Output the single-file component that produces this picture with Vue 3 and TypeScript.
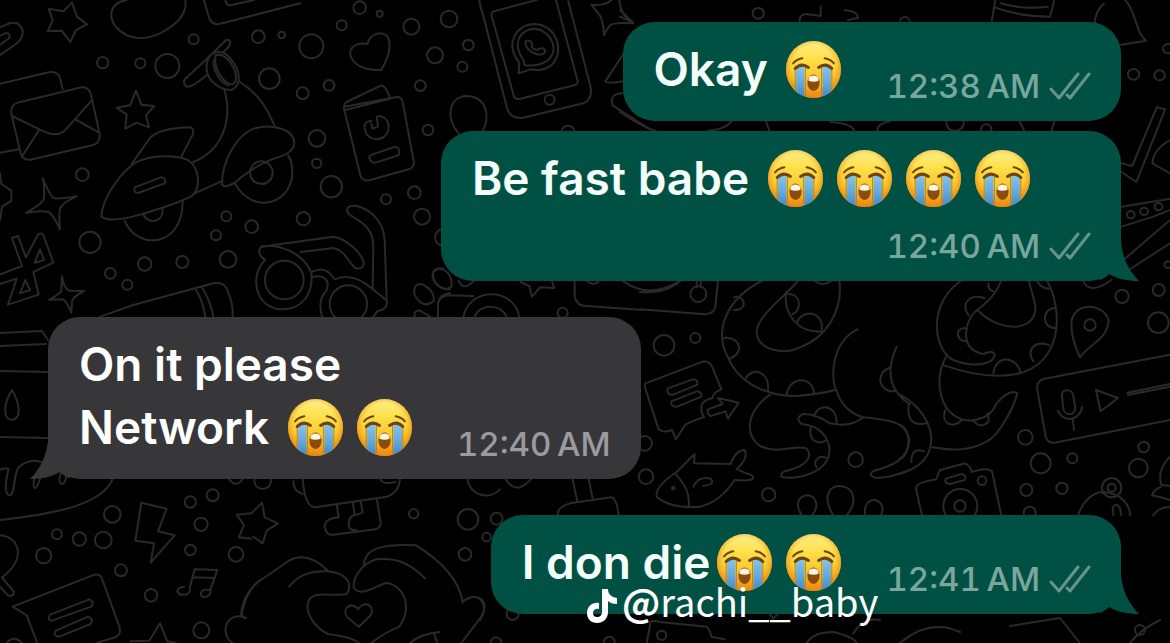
<script setup lang="ts">
interface Message {
  id: number
  lines: { text: string; sobs: number }[]
  time: string
  sent: boolean
  tail: boolean
  startsGroup: boolean
}

const messages: Message[] = [
  { id: 1, lines: [{ text: 'Okay ', sobs: 1 }], time: '12:38\u202fAM', sent: true, tail: false, startsGroup: false },
  { id: 2, lines: [{ text: 'Be fast babe ', sobs: 4 }], time: '12:40\u202fAM', sent: true, tail: true, startsGroup: false },
  {
    id: 3,
    lines: [{ text: 'On it please', sobs: 0 }, { text: 'Network ', sobs: 2 }],
    time: '12:40\u202fAM', sent: false, tail: true, startsGroup: true,
  },
  { id: 4, lines: [{ text: 'I don die', sobs: 2 }], time: '12:41\u202fAM', sent: true, tail: true, startsGroup: true },
]

interface Doodle {
  transform: string
  paths: string[]
  circles: [number, number, number][]
}

const doodles: Doodle[] = [
  {
    transform: 'scale(.33333)',
    paths: [
      'M216 8 L231 50 L261 73 L228 90 L211 126 L185 92 L143 94 L158 62 L146 26 L190 34 Z',
      'M0 82 L28 70 Q60 62 68 92 Q70 118 48 132 L0 165 M0 108 L16 99 Q32 100 28 114 L0 134',
      'M380 0 C330 8 325 48 345 78 C380 120 430 122 480 100 C535 72 562 40 556 0',
      'M612 0 L626 50 Q634 76 658 72 L900 10 M676 0 Q680 18 692 16 L762 0',
      'M0 251 L140 218 Q172 210 180 234 L188 268 M0 458 L56 448',
      'M52 308 L245 262 Q266 260 273 284 L299 402 Q302 426 282 434 L92 479 Q68 482 62 460 L34 342 Q30 316 52 308 Z M36 348 L126 392 Q165 412 192 394 L275 302 M116 392 L67 468 M226 358 L297 398',
      'M408 272 L424 314 L463 318 L438 346 L447 382 L409 368 L376 386 L380 344 L350 323 L390 316 Z',
      'M396 490 L450 414 Q480 384 570 382 Q584 386 578 404 L544 470',
      'M304 650 C306 600 350 534 390 500 C430 464 520 462 564 480 C600 505 602 560 578 586 Q550 605 420 644 Q330 670 304 650 Z',
      'M404 562 L482 532 Q500 532 494 550 L414 579 Q400 578 404 562 Z',
      'M374 662 C410 752 550 744 548 602 M430 644 C448 676 492 666 488 624',
      'M580 486 C660 454 700 370 674 272 M584 580 L664 544',
      'M720 246 C780 285 800 324 824 378',
      'M666 554 C666 480 710 408 760 386 C820 368 890 390 882 436 Q878 456 840 470 C780 488 740 518 704 548 Q674 566 666 554 Z',
      'M704 550 C760 650 888 612 876 500 Q874 480 864 466',
      'M632 166 L678 120 Q696 116 688 138 L669 158 M632 166 L556 236 Q546 250 560 260 Q574 264 620 226',
      'M645 158 C616 166 610 214 636 244 Q660 270 696 270 C728 250 720 210 690 174 Q670 150 645 158 Z M642 180 C636 200 654 244 684 256',
      'M646 166 C680 154 716 214 706 246 C690 272 640 220 646 166 Z',
      'M128 534 Q148 584 160 594 Q180 598 230 589 Q184 610 180 626 Q176 650 180 688 Q158 642 146 636 Q124 630 78 639 Q130 610 132 594 Q134 560 128 534 Z',
      'M186 829 Q190 864 208 872 L252 873 Q220 890 216 904 L214 938 Q200 904 190 898 L148 899 Q180 882 184 872 Z',
      'M36 714 L54 708 L78 772 L115 702 Q126 696 132 710 L160 788 L100 816 L116 884 L24 914 L50 836 L0 852 M0 824 L66 798 L36 714 M120 748 L132 780 L104 788 Z M76 840 L90 870 L60 880 Z',
      'M0 520 L4 552 L34 572 V602 L6 620 L0 660',
      'M300 950 L400 915 L640 850 Q672 844 682 870 Q700 910 698 950 M586 866 Q608 900 616 950 M606 862 Q630 900 640 950',
    ],
    circles: [[308,188,17],[421,190,15],[502,198,36],[581,118,15],[775,110,19],[845,105,10],[808,236,31],[784,518,34],[247,524,19],[679,649,15],[648,706,15],[755,680,19],[270,727,32],[434,792,20],[547,786,18],[684,778,25],[331,820,16],[382,854,15]],
  },
  {
    transform: 'translate(230 0) scale(.33333)',
    paths: [
      'M412 132 C420 100 458 90 474 112 C488 144 470 180 454 210 C400 212 366 194 360 160 C364 130 396 128 412 132 Z',
      'M343 320 L505 290 Q516 296 518 306 L552 488 Q552 502 536 508 L418 541 Q398 544 391 526 L343 330 Q338 316 350 306 L452 257 Q466 254 480 294 M346 330 L480 296',
      'M424 362 Q400 366 404 384 C408 430 474 430 476 380 C474 356 460 346 440 350 L444 380 L428 386 L424 370 M426 464 L490 442 Q508 438 508 458 Q508 466 498 468 L440 487 Q424 492 418 474 Q416 468 426 464 Z',
      'M352 626 C360 610 394 616 424 640 Q462 672 464 720 L470 902 M428 866 L430 740 Q430 690 390 664 L356 642 Q350 636 352 626',
      'M94 740 L310 710 C350 716 396 760 402 790 Q398 810 376 804 C350 780 344 750 310 744 L212 756',
      'M94 740 Q76 760 106 780 C60 820 70 920 150 928 C220 930 250 880 244 818 C220 760 150 730 94 740 M246 816 Q286 794 314 838 C370 814 410 850 472 904 Q470 930 444 932 L430 950 M246 832 C280 822 304 840 288 874 Q262 900 276 950',
      'M660 880 Q630 880 624 910 V950 M554 950 Q550 930 570 932 L600 950 M640 806 Q606 800 608 832 Q620 868 660 868',
      'M580 854 C550 844 544 880 566 902 Q590 924 612 902 Q612 870 580 854 Z',
    ],
    circles: [[389,23,19],[449,41,9],[335,76,15],[244,139,36],[544,80,24],[615,166,24],[297,256,16],[218,280,18],[571,257,16],[594,390,16],[261,415,25],[260,490,14],[304,560,32],[220,656,20],[468,598,15],[553,578,19],[576,650,24],[163,840,58],[355,912,56],[640,712,25]],
  },
  {
    transform: 'translate(430 0) scale(.33333)',
    paths: [
      'M148 0 Q152 28 158 40 L230 320 Q238 356 276 354 L460 310 Q488 298 482 262 L414 0 M184 44 L252 290 Q256 300 272 296 L438 254 Q446 248 442 240 L378 0 M184 44 Q184 34 198 32 L320 0',
      'M266 220 L268 188 C222 130 260 72 314 72 C378 74 406 152 366 194 Q340 216 302 208 Z M284 196 L280 180 C240 120 280 86 316 86 C360 90 392 150 352 182 Q326 200 284 196',
      'M286 126 C294 116 306 124 306 134 Q302 146 320 150 Q342 138 346 154 Q342 168 318 162 Q286 150 286 126 Z',
      'M484 14 Q526 18 544 0 M568 0 Q572 48 608 70 Q550 66 540 76 Q530 86 522 106 Q520 68 512 50 L484 14',
      'M588 150 L526 244 Q530 252 582 244 M580 280 Q536 280 548 316 L660 388',
      'M86 400 C44 350 58 290 110 288 C170 290 184 350 154 400',
    ],
    circles: [[57,57,25],[115,135,16],[97,200,15],[359,299,15],[414,397,20]],
  },
  {
    transform: 'translate(620 10) scale(.3508 .33333)',
    paths: [
      'M0 20 L38 38 L0 0 M512 36 Q510 14 530 12 L572 18 V-10 M640 0 Q680 4 678 24 L650 30 M1060 32 L1070 -30 M1068 -8 Q1140 20 1226 20 L1238 -30 M1085 -20 Q1150 0 1220 -10 M1354 60 Q1348 10 1380 -20 M1440 -30 C1470 0 1470 70 1500 92 L1428 104',
      'M0 306 Q60 350 100 362 M250 362 Q304 358 320 330 M416 334 L426 362 M600 336 Q660 340 668 362 M734 362 Q734 340 770 334 M930 336 Q930 362 956 362 Q980 360 980 336 M1140 336 L1152 362 M1230 362 L1238 334',
      'M1530 292 L1554 298 L1472 516 L1430 486 M1530 292 L1460 468 L1430 460 M1568 390 Q1518 420 1518 460 L1568 490 M1430 590 L1568 566 M1430 650 L1520 620 L1568 600 M1424 760 L1568 630 M1450 780 L1568 700',
    ],
    circles: [[394,10,16],[1562,116,14],[1464,193,16],[1538,196,15],[1535,590,11],[1494,604,11],[1456,614,11],[1562,764,10],[812,35,14],[1044,358,15]],
  },
  {
    transform: 'translate(640 270) scale(.33333)',
    paths: [
      'M0 66 Q80 72 124 30 M0 118 L196 133 Q220 132 226 112 L234 30 M170 30 V52 M182 30 V52',
      'M370 30 C250 90 224 190 264 262 C300 350 400 380 470 378 Q540 372 586 360',
      'M476 30 C430 86 346 140 350 190 C356 240 430 256 480 232 C560 202 610 120 598 30 M438 66 C430 140 480 190 544 184',
      'M282 82 C310 70 330 120 282 120 M252 204 C300 198 316 250 268 266 M318 324 C336 290 390 304 384 360 M440 374 C450 314 520 320 522 370 M444 72 C488 72 482 126 458 132 M470 158 C486 118 548 120 546 178 M520 30 Q550 54 576 30',
      'M652 178 C570 220 572 330 590 364 Q610 424 670 442 M770 230 C730 320 760 370 810 404 M748 294 C706 308 714 366 764 364 M670 442 Q630 474 570 460 Q530 432 490 432 Q462 446 486 462 C560 470 590 540 552 584 C520 620 450 628 424 620 Q420 606 440 602 C500 588 520 560 500 536 C470 520 420 556 360 528 C320 500 310 430 390 374 M670 442 C760 450 800 460 808 510 C804 570 750 590 702 602 Q680 616 708 624 Q760 622 810 600',
      'M522 438 C534 400 590 400 590 460 M512 474 C506 510 530 526 558 512 M530 592 C516 570 540 554 558 564',
      'M16 340 L190 274 Q212 274 218 294 L244 358 Q220 366 218 384 Q186 390 184 410 Q182 426 192 442 Q160 450 136 464 L108 508 L96 480 Q70 490 56 478 L16 356 Q12 348 16 340 Z M82 356 L158 328 Q176 330 172 344 L100 374 Q80 376 82 356 Z M94 394 L170 364 Q188 366 184 380 L112 410 Q92 412 94 394 Z M204 418 L248 402 L234 384 L296 398 L264 446 L256 424 L212 438 Q200 432 204 418 Z',
      'M50 680 Q44 650 110 606 L164 552 L162 580 L272 582 Q286 540 314 540 Q326 564 290 598 L336 616 Q354 636 284 630 Q240 696 180 710 Q90 716 50 680 Z M108 614 Q152 660 146 710 M160 650 Q176 616 212 626 Q228 642 190 648',
      'M486 736 C460 700 480 676 504 676 C530 680 538 710 516 736 M580 736 C550 690 560 648 600 648 C646 650 652 700 620 736 M676 736 C670 700 690 688 706 690 C730 698 732 720 722 736',
    ],
    circles: [[72,226,31],[166,204,15],[175,72,24],[14,520,22],[18,620,22],[386,674,20],[647,569,22],[100,654,4]],
  },
  {
    transform: 'translate(900 270) scale(.33333)',
    paths: [
      'M186 30 C80 100 100 240 160 270 C220 294 284 284 284 252 Q276 240 250 252 C180 240 190 160 226 124 Q288 80 304 30 M232 120 C310 200 430 180 402 90 L386 30 M440 30 C490 120 490 280 350 312 Q260 330 132 286',
      'M206 136 C180 100 210 70 254 84 M266 40 Q262 58 280 64 M202 176 C164 166 164 216 202 214 M466 114 C422 116 426 176 466 174 M400 274 C376 236 410 210 448 226 M280 310 C290 250 350 260 362 308 M410 30 Q420 54 446 56',
      'M142 254 C100 320 120 400 154 430 C200 470 270 450 290 400 Q330 354 352 370 C340 420 300 480 280 500 C220 550 140 540 98 532 M136 420 C120 460 160 478 186 450 M222 454 Q244 478 266 454 L264 430 M0 374 C120 440 130 580 0 610 M26 404 C20 450 40 468 78 460 M72 544 Q34 530 34 576 M0 464 C34 480 34 550 0 568',
      'M540 262 C520 220 504 160 522 134 C550 92 620 110 626 154 C620 210 570 220 540 262 Z M810 254 L434 326 Q408 332 412 360 L438 504 Q446 520 464 518 L810 450 M486 378 C480 356 520 354 520 380 L526 412 C526 440 492 438 490 414 Z M474 422 C494 466 546 444 546 410 M518 444 L522 480 M588 360 L654 384 L602 424 Z M682 368 L810 342 M684 375 L810 350',
      'M66 736 L48 656 Q46 638 108 628 L120 600 L196 580 Q212 590 216 606 Q260 590 276 604 L304 736 M138 626 L184 612 Q202 616 194 630 L150 642 Q130 640 138 626 Z',
      'M534 736 C550 690 580 666 610 666 C660 670 690 700 690 736 M640 736 L638 712 Q650 696 660 714 L664 736 M810 560 Q770 600 784 644 L810 648 M810 690 Q790 684 756 676 Q764 656 782 652 M810 712 Q780 708 760 736 M550 34 Q570 76 634 30',
    ],
    circles: [[666,79,20],[776,60,18],[775,158,31],[570,165,17],[376,502,22],[422,580,30],[517,565,15],[731,531,16],[715,594,28],[379,660,18],[486,655,17],[246,632,13],[181,708,51],[180,708,17],[635,653,29],[635,653,12],[389,728,18]],
  },
  {
    transform: 'translate(0 440) scale(.33333)',
    paths: [
      'M0 90 Q10 84 26 86 C12 140 16 166 30 166 C46 162 40 100 56 82 Q76 62 108 62 L124 66 M104 110 C94 150 108 158 120 116 M182 100 C168 140 200 142 198 104 M0 240 C180 220 310 190 338 116',
      'M0 286 C60 290 80 360 6 412 L42 456 Q40 472 24 466 L0 440 M38 500 L284 404 Q302 400 308 422 L358 560 Q366 588 338 594 L290 609 M38 500 L80 526 L112 609 M150 524 L268 478 Q284 484 274 500 L156 542 Q140 540 150 524 Z M168 572 L264 530 Q282 536 272 552 L178 590 Q156 588 168 572 Z M20 609 Q40 584 66 609',
      'M424 188 L500 206 L474 274 L524 286 L452 368 L462 310 L406 302 Z M552 440 C520 444 530 468 558 464 Q570 462 570 440 L584 388 L652 390 L630 452 M578 412 L644 414 M632 452 C600 440 592 472 616 472 Q632 466 632 452',
      'M392 604 L448 602 L480 550 L502 604 L528 609 M724 530 Q722 470 780 420 M738 534 C680 510 656 580 698 609 M688 118 Q706 144 728 118',
      'M754 220 L710 224 L732 256 L716 292 L754 296',
    ],
    circles: [[337,223,25],[171,283,15],[238,297,20],[310,300,25],[131,347,23],[363,391,18],[453,466,19],[571,186,17],[638,166,18],[603,253,20],[571,330,16],[708,343,22],[604,571,24]],
  },
  {
    transform: 'translate(240 460) scale(.33333)',
    paths: [
      'M34 160 L66 128 L74 172 L114 190 L80 212 L68 250 L40 230 M160 64 Q160 94 188 102 M188 56 Q194 142 226 142 L440 110 Q476 100 480 56 M420 56 Q430 76 466 66',
      'M290 132 L296 172 Q254 176 254 200 Q258 228 280 224 L406 208 Q428 202 420 176 L410 114 M338 126 L344 164 Q320 176 328 202 Q332 212 348 210 M362 124 L368 158 L344 166',
      'M14 474 L4 464 Q20 390 54 366 L150 300 C190 280 230 300 264 332 M148 380 Q184 330 264 334 C320 340 338 370 322 400 C290 414 230 390 208 418 C190 450 220 500 264 522 Q340 532 356 549 M372 318 C370 260 440 252 528 256 C600 300 660 360 668 428 M556 356 C500 300 460 294 410 298 C360 310 330 370 344 388 C370 410 410 376 440 368 C490 376 520 440 478 500 Q430 520 394 549 M668 424 C720 390 750 430 724 470 L664 549 M510 549 Q540 522 598 516 M582 520 L592 549 M682 56 C690 110 750 120 780 88',
      'M356 500 L320 470 C304 440 340 424 354 448 C370 420 408 434 392 466 Z',
    ],
    circles: [[68,62,25],[521,161,14],[684,178,31],[770,176,18],[740,231,13],[675,283,19],[768,548,16]],
  },
  {
    transform: 'translate(480 470) scale(.33333)',
    paths: [
      'M76 26 Q110 80 154 26 M278 28 L292 94 M326 26 L338 86 M234 136 Q230 112 270 100 L394 82 Q410 84 416 136',
      'M0 388 Q24 410 0 450 M500 519 L512 456 Q520 450 540 456 L680 470 Q690 480 694 500 L734 508 M980 519 Q1000 486 1060 486 Q1120 500 1130 519 M1120 490 Q1150 440 1200 450 M870 434 L880 446 L892 434',
    ],
    circles: [[98,432,18],[545,496,14],[388,516,16]],
  },
  {
    transform: 'translate(230 200) scale(.33333)',
    paths: [
      'M624 350 V310 Q630 286 660 286 L730 288 M700 350 C720 260 850 260 868 350 M734 350 C750 310 810 310 830 350 M686 242 Q700 276 732 242 M610 216 C630 190 670 220 664 260 C640 280 604 250 610 216 Z M872 246 L898 258 L906 290 L930 262 L972 264 L966 242 M1034 242 V290 Q1040 318 1070 318 M1070 242 Q1090 262 1108 242 M1180 244 Q1260 300 1350 242 M1070 318 L1240 330',
    ],
    circles: [[998,338,15]],
  },
  {
    transform: 'scale(1)',
    paths: [
      'M0 333 L42 331 L48 340 M0 346 L46 344 M0 371 L47 372 M0 437 L48 438 M12 390 C2 406 4 420 12 420 C22 418 20 404 12 390 Z M1160 620 Q1140 630 1130 643 M900 643 Q930 618 960 632 M1010 626 L1060 618 L1080 643',
    ],
    circles: [[1140,630,5]],
  },
]
</script>

<template>
  <main class="chat">
    <svg class="wallpaper" viewBox="0 0 1170 643" preserveAspectRatio="xMidYMid slice" aria-hidden="true">
      <g v-for="(group, g) in doodles" :key="g" :transform="group.transform">
        <path v-for="(d, p) in group.paths" :key="p" :d="d" />
        <circle v-for="([cx, cy, r], c) in group.circles" :key="c" :cx="cx" :cy="cy" :r="r" />
      </g>
    </svg>

    <svg class="defs" aria-hidden="true">
      <defs>
        <linearGradient id="face" x1="0" y1="0" x2="0" y2="1">
          <stop offset="0" stop-color="#fff08a" />
          <stop offset=".3" stop-color="#fde04b" />
          <stop offset=".65" stop-color="#fbc62c" />
          <stop offset="1" stop-color="#ef8c14" />
        </linearGradient>
        <radialGradient id="rim" cx=".5" cy=".46" r=".55">
          <stop offset=".7" stop-color="#f08a10" stop-opacity="0" />
          <stop offset="1" stop-color="#ea850f" stop-opacity=".8" />
        </radialGradient>
        <linearGradient id="tear" x1="0" y1="0" x2="0" y2="1">
          <stop offset="0" stop-color="#86c2ec" />
          <stop offset=".55" stop-color="#62a7dc" />
          <stop offset="1" stop-color="#3c87cd" />
        </linearGradient>
        <clipPath id="head"><ellipse cx="28" cy="28" rx="27" ry="28" /></clipPath>
        <symbol id="sob" viewBox="0 0 56 56">
          <ellipse cx="28" cy="28" rx="27" ry="28" fill="url(#face)" />
          <ellipse cx="28" cy="28" rx="27" ry="28" fill="url(#rim)" />
          <g clip-path="url(#head)">
            <path d="M11 25 H19 V56 H11 Z M37 25 H45 V56 H37 Z" fill="url(#tear)" />
            <path d="M10 26 V56 M20 26 V56 M36 26 V56 M46 26 V56" stroke="#a08a32" stroke-width="1" />
          </g>
          <path d="M8 22 Q11 18 17 17 M39 17 Q45 18 48 22" fill="none" stroke="#6b4410" stroke-width="2" stroke-linecap="round" />
          <path d="M10 27 Q16 21 23 26 M33 26 Q40 21 46 27" fill="none" stroke="#6b4614" stroke-width="3" stroke-linecap="round" />
          <ellipse cx="28" cy="41" rx="6" ry="8" fill="#8b4b0b" />
          <path d="M23 39 Q23 34 28 34 Q33 34 33 39 Q28 41 23 39 Z" fill="#fff6e4" />
        </symbol>
      </defs>
    </svg>

    <ol class="messages">
      <li
        v-for="message in messages"
        :key="message.id"
        class="bubble"
        :class="{ sent: message.sent, received: !message.sent, spaced: message.startsGroup }"
      >
        <svg v-if="message.tail" class="tail" viewBox="0 0 40 48" aria-hidden="true">
          <path d="M0 0 H22 V10 C24 26 30 38 40 48 C28 48 19 46 10 41 Q5 46 0 47 Z" />
        </svg>
        <p class="body">
          <span v-for="(line, l) in message.lines" :key="l" class="line">{{ line.text
            }}<svg v-for="n in line.sobs" :key="n" class="emoji" role="img" aria-label="😭"><use href="#sob" /></svg></span>
        </p>
        <p class="meta">
          <time>{{ message.time }}</time>
          <svg v-if="message.sent" class="ticks" viewBox="0 0 42 30" role="img" aria-label="Delivered">
            <path d="M2 18 L10 27 L29 3 M18 24 L21 27 L40 3" />
          </svg>
        </p>
      </li>
    </ol>

    <p class="watermark">
      <svg class="note" viewBox="0 0 30 34" aria-hidden="true">
        <path d="M15 0 H21 C21 5 24 8 30 9 V15 C26 15 23 14 21 12 V23 C21 30 16 34 10 34 C4 34 0 30 0 24 C0 17 6 13 12 14 V20 C9 19 6 21 6 24 C6 27 8 28 10 28 C13 28 15 26 15 23 Z" />
      </svg>
      <span><b>@</b>rachi__baby</span>
    </p>
  </main>
</template>

<style>
body {
  margin: 0;
  background: #000;
}
</style>

<style scoped>
.chat {
  position: relative;
  box-sizing: border-box;
  min-height: 100vh;
  padding: 22px 49px 29px 48px;
  overflow: hidden;
  background: #000;
  font-family: Inter, "Liberation Sans", sans-serif;
}

.wallpaper {
  position: absolute;
  inset: 0;
  width: 100%;
  height: 100%;
  fill: none;
  stroke: #292929;
  stroke-width: 2px;
  stroke-linejoin: round;
  stroke-linecap: round;
}

.wallpaper path,
.wallpaper circle {
  vector-effect: non-scaling-stroke;
}

.defs {
  position: absolute;
  width: 0;
  height: 0;
}

.messages {
  position: relative;
  display: flex;
  flex-direction: column;
  gap: 10px;
  margin: 0;
  padding: 0;
  list-style: none;
}

.bubble {
  position: relative;
  display: flex;
  flex-wrap: wrap;
  align-items: flex-end;
  justify-content: space-between;
  gap: 11px 38px;
  box-sizing: border-box;
  max-width: min(64%, 680px);
  padding: 16px 30px 15px 31px;
  border-radius: 32px;
}

.sent {
  align-self: flex-end;
  background: #005144;
  color: #f4fffc;
  fill: #005144;
}

.received {
  align-self: flex-start;
  background: #373739;
  color: #fff;
  fill: #373739;
}

.spaced {
  margin-top: 26px;
}

.tail {
  position: absolute;
  right: -18px;
  bottom: 0;
  width: 40px;
  height: 48px;
}

.received .tail {
  right: auto;
  left: -18px;
  transform: scaleX(-1);
}

.body,
.meta,
.watermark {
  margin: 0;
}

.body {
  margin-bottom: 5px;
  font-size: 46px;
  font-weight: 600;
  line-height: 63px;
}

.line {
  display: block;
  height: 63px;
  white-space: pre;
}

.emoji {
  width: 57px;
  height: 57px;
  margin: 0 6px;
  vertical-align: -12px;
}

.meta {
  display: flex;
  align-items: center;
  gap: 9px;
  margin-left: auto;
  color: #9b9b9f;
  font-size: 33px;
  font-variant-numeric: tabular-nums;
  font-weight: 500;
  line-height: 40px;
  white-space: nowrap;
}

.sent .meta {
  color: #7ba69e;
}

.ticks {
  width: 42px;
  height: 30px;
  fill: none;
  stroke: #669489;
  stroke-width: 3px;
  stroke-linecap: round;
  stroke-linejoin: round;
}

.watermark {
  position: absolute;
  bottom: 14px;
  left: 50%;
  display: flex;
  align-items: center;
  gap: 5px;
  padding-left: 2px;
  color: #fff;
  font-family: "Noto Sans CJK SC", "Noto Sans", sans-serif;
  font-size: 38px;
  line-height: 56px;
}

.note {
  width: 30px;
  height: 34px;
  margin-top: 10px;
  fill: #fff;
}
</style>
